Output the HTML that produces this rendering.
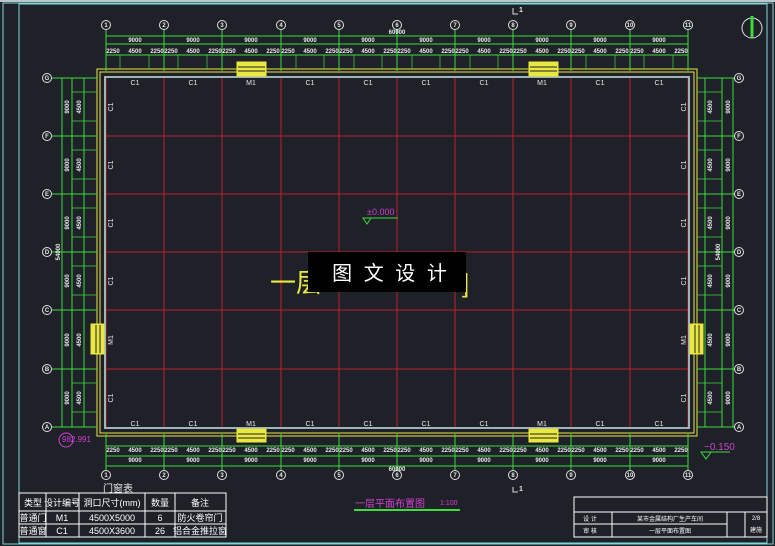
<!DOCTYPE html>
<html><head><meta charset="utf-8"><style>
html,body{margin:0;padding:0;background:#1f2128;}
svg{display:block}
text{font-family:"Liberation Sans","Noto Sans CJK SC",sans-serif}
</style></head><body>
<svg width="775" height="546" viewBox="0 0 775 546" xmlns="http://www.w3.org/2000/svg">
<rect width="775" height="546" fill="#1f2128"/>
<rect x="3" y="3" width="770" height="541" fill="none" stroke="#7fd8d8" stroke-width="1"/>
<rect x="19" y="4" width="748" height="539" fill="none" stroke="#7fd8d8" stroke-width="1"/>
<rect x="0" y="0" width="775" height="2" fill="#bfc4c8"/>

<g stroke="#c0202a" stroke-width="1">
<line x1="106" y1="78" x2="106" y2="427"/><line x1="164" y1="78" x2="164" y2="427"/><line x1="222" y1="78" x2="222" y2="427"/><line x1="281" y1="78" x2="281" y2="427"/><line x1="339" y1="78" x2="339" y2="427"/><line x1="397" y1="78" x2="397" y2="427"/><line x1="455" y1="78" x2="455" y2="427"/><line x1="513" y1="78" x2="513" y2="427"/><line x1="571" y1="78" x2="571" y2="427"/><line x1="630" y1="78" x2="630" y2="427"/><line x1="688" y1="78" x2="688" y2="427"/>
<line x1="106" y1="136" x2="688" y2="136"/><line x1="106" y1="194" x2="688" y2="194"/><line x1="106" y1="252" x2="688" y2="252"/><line x1="106" y1="310" x2="688" y2="310"/><line x1="106" y1="369" x2="688" y2="369"/>
</g>
<rect x="105" y="77" width="584" height="351" fill="none" stroke="#9fb4b8" stroke-width="2"/>
<rect x="100" y="72" width="594" height="361" fill="none" stroke="#e8e840" stroke-width="1"/>
<rect x="97" y="69" width="600" height="367" fill="none" stroke="#e8e840" stroke-width="1"/>
<g fill="#e8e840" stroke="#e8e840">
<rect x="237" y="62" width="29" height="14"/><rect x="529" y="62" width="29" height="14"/>
<rect x="237" y="429" width="29" height="13"/><rect x="529" y="429" width="29" height="13"/>
<rect x="91" y="324" width="13" height="30"/><rect x="690" y="324" width="13" height="30"/>
</g>
<g stroke="#1f2128" stroke-width="1"><line x1="238" y1="67" x2="265" y2="67"/><line x1="238" y1="71" x2="265" y2="71"/><line x1="530" y1="67" x2="557" y2="67"/><line x1="530" y1="71" x2="557" y2="71"/><line x1="238" y1="434" x2="265" y2="434"/><line x1="238" y1="438" x2="265" y2="438"/><line x1="530" y1="434" x2="557" y2="434"/><line x1="530" y1="438" x2="557" y2="438"/><line x1="96" y1="325" x2="96" y2="353"/><line x1="100" y1="325" x2="100" y2="353"/><line x1="695" y1="325" x2="695" y2="353"/><line x1="699" y1="325" x2="699" y2="353"/></g>

<g stroke="#3cdc3c" stroke-width="1" fill="none">
<line x1="106" y1="36" x2="688" y2="36"/><line x1="106" y1="44" x2="688" y2="44"/><line x1="106" y1="55" x2="688" y2="55"/>
<line x1="106" y1="446" x2="688" y2="446"/><line x1="106" y1="456" x2="688" y2="456"/><line x1="106" y1="466" x2="688" y2="466"/>
<line x1="62" y1="78" x2="62" y2="427"/><line x1="72" y1="78" x2="72" y2="427"/><line x1="84" y1="78" x2="84" y2="427"/>
<line x1="705" y1="78" x2="705" y2="427"/><line x1="722" y1="78" x2="722" y2="427"/><line x1="733" y1="78" x2="733" y2="427"/>
<line x1="106" y1="30" x2="106" y2="71"/><line x1="164" y1="30" x2="164" y2="71"/><line x1="222" y1="30" x2="222" y2="71"/><line x1="281" y1="30" x2="281" y2="71"/><line x1="339" y1="30" x2="339" y2="71"/><line x1="397" y1="30" x2="397" y2="71"/><line x1="455" y1="30" x2="455" y2="71"/><line x1="513" y1="30" x2="513" y2="71"/><line x1="571" y1="30" x2="571" y2="71"/><line x1="630" y1="30" x2="630" y2="71"/><line x1="688" y1="30" x2="688" y2="71"/>
<line x1="106" y1="434" x2="106" y2="470"/><line x1="164" y1="434" x2="164" y2="470"/><line x1="222" y1="434" x2="222" y2="470"/><line x1="281" y1="434" x2="281" y2="470"/><line x1="339" y1="434" x2="339" y2="470"/><line x1="397" y1="434" x2="397" y2="470"/><line x1="455" y1="434" x2="455" y2="470"/><line x1="513" y1="434" x2="513" y2="470"/><line x1="571" y1="434" x2="571" y2="470"/><line x1="630" y1="434" x2="630" y2="470"/><line x1="688" y1="434" x2="688" y2="470"/>
<line x1="52" y1="78" x2="97" y2="78"/><line x1="52" y1="136" x2="97" y2="136"/><line x1="52" y1="194" x2="97" y2="194"/><line x1="52" y1="252" x2="97" y2="252"/><line x1="52" y1="310" x2="97" y2="310"/><line x1="52" y1="369" x2="97" y2="369"/><line x1="52" y1="427" x2="97" y2="427"/>
<line x1="697" y1="78" x2="735" y2="78"/><line x1="697" y1="136" x2="735" y2="136"/><line x1="697" y1="194" x2="735" y2="194"/><line x1="697" y1="252" x2="735" y2="252"/><line x1="697" y1="310" x2="735" y2="310"/><line x1="697" y1="369" x2="735" y2="369"/><line x1="697" y1="427" x2="735" y2="427"/>
<g stroke-width="0.7"><line x1="120" y1="55" x2="120" y2="69"/><line x1="149" y1="55" x2="149" y2="69"/><line x1="178" y1="55" x2="178" y2="69"/><line x1="207" y1="55" x2="207" y2="69"/><line x1="296" y1="55" x2="296" y2="69"/><line x1="324" y1="55" x2="324" y2="69"/><line x1="354" y1="55" x2="354" y2="69"/><line x1="382" y1="55" x2="382" y2="69"/><line x1="412" y1="55" x2="412" y2="69"/><line x1="440" y1="55" x2="440" y2="69"/><line x1="470" y1="55" x2="470" y2="69"/><line x1="498" y1="55" x2="498" y2="69"/><line x1="586" y1="55" x2="586" y2="69"/><line x1="615" y1="55" x2="615" y2="69"/><line x1="644" y1="55" x2="644" y2="69"/><line x1="673" y1="55" x2="673" y2="69"/>
<line x1="72" y1="92" x2="97" y2="92"/><line x1="72" y1="121" x2="97" y2="121"/><line x1="72" y1="150" x2="97" y2="150"/><line x1="72" y1="179" x2="97" y2="179"/><line x1="72" y1="208" x2="97" y2="208"/><line x1="72" y1="237" x2="97" y2="237"/><line x1="72" y1="266" x2="97" y2="266"/><line x1="72" y1="295" x2="97" y2="295"/><line x1="72" y1="383" x2="97" y2="383"/><line x1="72" y1="412" x2="97" y2="412"/>
<line x1="697" y1="92" x2="722" y2="92"/><line x1="697" y1="121" x2="722" y2="121"/><line x1="697" y1="150" x2="722" y2="150"/><line x1="697" y1="179" x2="722" y2="179"/><line x1="697" y1="208" x2="722" y2="208"/><line x1="697" y1="237" x2="722" y2="237"/><line x1="697" y1="266" x2="722" y2="266"/><line x1="697" y1="295" x2="722" y2="295"/><line x1="697" y1="383" x2="722" y2="383"/><line x1="697" y1="412" x2="722" y2="412"/></g>
<g stroke="#e0e0e0"><circle cx="106" cy="25" r="4.5"/><circle cx="164" cy="25" r="4.5"/><circle cx="222" cy="25" r="4.5"/><circle cx="281" cy="25" r="4.5"/><circle cx="339" cy="25" r="4.5"/><circle cx="397" cy="25" r="4.5"/><circle cx="455" cy="25" r="4.5"/><circle cx="513" cy="25" r="4.5"/><circle cx="571" cy="25" r="4.5"/><circle cx="630" cy="25" r="4.5"/><circle cx="688" cy="25" r="4.5"/>
<circle cx="106" cy="475" r="4.5"/><circle cx="164" cy="475" r="4.5"/><circle cx="222" cy="475" r="4.5"/><circle cx="281" cy="475" r="4.5"/><circle cx="339" cy="475" r="4.5"/><circle cx="397" cy="475" r="4.5"/><circle cx="455" cy="475" r="4.5"/><circle cx="513" cy="475" r="4.5"/><circle cx="571" cy="475" r="4.5"/><circle cx="630" cy="475" r="4.5"/><circle cx="688" cy="475" r="4.5"/>
<circle cx="47" cy="78" r="4.5"/><circle cx="47" cy="136" r="4.5"/><circle cx="47" cy="194" r="4.5"/><circle cx="47" cy="252" r="4.5"/><circle cx="47" cy="310" r="4.5"/><circle cx="47" cy="369" r="4.5"/><circle cx="47" cy="427" r="4.5"/>
<circle cx="739" cy="78" r="4.5"/><circle cx="739" cy="136" r="4.5"/><circle cx="739" cy="194" r="4.5"/><circle cx="739" cy="252" r="4.5"/><circle cx="739" cy="310" r="4.5"/><circle cx="739" cy="369" r="4.5"/><circle cx="739" cy="427" r="4.5"/>
<circle cx="752" cy="28" r="10"/></g>
<line x1="752" y1="16" x2="752" y2="38" stroke="#3cdc3c" stroke-width="3"/>
<path d="M513 8 V14 H518 M513 487 V492 H518" stroke="#e0e0e0"/>
<path d="M701 452 L711 452 L706 459 Z M701 452 H730" stroke="#3cdc3c"/>
<path d="M363 218 L371 218 L367 224 Z M363 218 H398" stroke="#3cdc3c"/>
<line x1="354" y1="510" x2="460" y2="510" stroke="#3cdc3c" stroke-width="2"/>
</g>
<g fill="#e8e8e8" font-size="6" text-anchor="middle" font-weight="bold">
<text x="135" y="42">9000</text><text x="193" y="42">9000</text><text x="251" y="42">9000</text><text x="310" y="42">9000</text><text x="368" y="42">9000</text><text x="426" y="42">9000</text><text x="484" y="42">9000</text><text x="542" y="42">9000</text><text x="600" y="42">9000</text><text x="659" y="42">9000</text>
<text x="397" y="34">60000</text>
<text x="113" y="53">2250</text><text x="135" y="53">4500</text><text x="157" y="53">2250</text><text x="171" y="53">2250</text><text x="193" y="53">4500</text><text x="215" y="53">2250</text><text x="229" y="53">2250</text><text x="251" y="53">4500</text><text x="273" y="53">2250</text><text x="288" y="53">2250</text><text x="310" y="53">4500</text><text x="332" y="53">2250</text><text x="346" y="53">2250</text><text x="368" y="53">4500</text><text x="390" y="53">2250</text><text x="404" y="53">2250</text><text x="426" y="53">4500</text><text x="448" y="53">2250</text><text x="462" y="53">2250</text><text x="484" y="53">4500</text><text x="506" y="53">2250</text><text x="520" y="53">2250</text><text x="542" y="53">4500</text><text x="564" y="53">2250</text><text x="578" y="53">2250</text><text x="600" y="53">4500</text><text x="622" y="53">2250</text><text x="637" y="53">2250</text><text x="659" y="53">4500</text><text x="681" y="53">2250</text>
<text x="113" y="452">2250</text><text x="135" y="452">4500</text><text x="157" y="452">2250</text><text x="171" y="452">2250</text><text x="193" y="452">4500</text><text x="215" y="452">2250</text><text x="229" y="452">2250</text><text x="251" y="452">4500</text><text x="273" y="452">2250</text><text x="288" y="452">2250</text><text x="310" y="452">4500</text><text x="332" y="452">2250</text><text x="346" y="452">2250</text><text x="368" y="452">4500</text><text x="390" y="452">2250</text><text x="404" y="452">2250</text><text x="426" y="452">4500</text><text x="448" y="452">2250</text><text x="462" y="452">2250</text><text x="484" y="452">4500</text><text x="506" y="452">2250</text><text x="520" y="452">2250</text><text x="542" y="452">4500</text><text x="564" y="452">2250</text><text x="578" y="452">2250</text><text x="600" y="452">4500</text><text x="622" y="452">2250</text><text x="637" y="452">2250</text><text x="659" y="452">4500</text><text x="681" y="452">2250</text>
<text x="135" y="462">9000</text><text x="193" y="462">9000</text><text x="251" y="462">9000</text><text x="310" y="462">9000</text><text x="368" y="462">9000</text><text x="426" y="462">9000</text><text x="484" y="462">9000</text><text x="542" y="462">9000</text><text x="600" y="462">9000</text><text x="659" y="462">9000</text>
<text x="397" y="471">60000</text>
<text x="106" y="27">1</text><text x="164" y="27">2</text><text x="222" y="27">3</text><text x="281" y="27">4</text><text x="339" y="27">5</text><text x="397" y="27">6</text><text x="455" y="27">7</text><text x="513" y="27">8</text><text x="571" y="27">9</text><text x="630" y="27">10</text><text x="688" y="27">11</text>
<text x="106" y="477">1</text><text x="164" y="477">2</text><text x="222" y="477">3</text><text x="281" y="477">4</text><text x="339" y="477">5</text><text x="397" y="477">6</text><text x="455" y="477">7</text><text x="513" y="477">8</text><text x="571" y="477">9</text><text x="630" y="477">10</text><text x="688" y="477">11</text>
<text x="47" y="80">G</text><text x="47" y="138">F</text><text x="47" y="196">E</text><text x="47" y="254">D</text><text x="47" y="312">C</text><text x="47" y="371">B</text><text x="47" y="429">A</text>
<text x="739" y="80">G</text><text x="739" y="138">F</text><text x="739" y="196">E</text><text x="739" y="254">D</text><text x="739" y="312">C</text><text x="739" y="371">B</text><text x="739" y="429">A</text>
<text x="521" y="12" font-size="7">1</text><text x="521" y="491" font-size="7">1</text>
</g>
<g fill="#e8e8e8" font-size="6" text-anchor="middle" font-weight="bold">
<text transform="translate(69,107) rotate(-90)">9000</text><text transform="translate(69,165) rotate(-90)">9000</text><text transform="translate(69,223) rotate(-90)">9000</text><text transform="translate(69,281) rotate(-90)">9000</text><text transform="translate(69,340) rotate(-90)">9000</text><text transform="translate(69,398) rotate(-90)">9000</text>
<text transform="translate(60,252) rotate(-90)">54000</text>
<text transform="translate(81,107) rotate(-90)">4500</text><text transform="translate(81,165) rotate(-90)">4500</text><text transform="translate(81,223) rotate(-90)">4500</text><text transform="translate(81,281) rotate(-90)">4500</text><text transform="translate(81,340) rotate(-90)">4500</text><text transform="translate(81,398) rotate(-90)">4500</text>
<text transform="translate(730,107) rotate(-90)">9000</text><text transform="translate(730,165) rotate(-90)">9000</text><text transform="translate(730,223) rotate(-90)">9000</text><text transform="translate(730,281) rotate(-90)">9000</text><text transform="translate(730,340) rotate(-90)">9000</text><text transform="translate(730,398) rotate(-90)">9000</text>
<text transform="translate(720,252) rotate(-90)">54000</text>
<text transform="translate(712,107) rotate(-90)">4500</text><text transform="translate(712,165) rotate(-90)">4500</text><text transform="translate(712,223) rotate(-90)">4500</text><text transform="translate(712,281) rotate(-90)">4500</text><text transform="translate(712,340) rotate(-90)">4500</text><text transform="translate(712,398) rotate(-90)">4500</text>
</g>
<g fill="#e8e8e8" font-size="7" text-anchor="middle">
<text x="135" y="85">C1</text><text x="193" y="85">C1</text><text x="251" y="85">M1</text><text x="310" y="85">C1</text><text x="368" y="85">C1</text><text x="426" y="85">C1</text><text x="484" y="85">C1</text><text x="542" y="85">M1</text><text x="600" y="85">C1</text><text x="659" y="85">C1</text>
<text x="135" y="426">C1</text><text x="193" y="426">C1</text><text x="251" y="426">M1</text><text x="310" y="426">C1</text><text x="368" y="426">C1</text><text x="426" y="426">C1</text><text x="484" y="426">C1</text><text x="542" y="426">M1</text><text x="600" y="426">C1</text><text x="659" y="426">C1</text>
<text transform="translate(113,107) rotate(-90)">C1</text><text transform="translate(113,165) rotate(-90)">C1</text><text transform="translate(113,223) rotate(-90)">C1</text><text transform="translate(113,281) rotate(-90)">C1</text><text transform="translate(113,340) rotate(-90)">M1</text><text transform="translate(113,398) rotate(-90)">C1</text>
<text transform="translate(686,107) rotate(-90)">C1</text><text transform="translate(686,165) rotate(-90)">C1</text><text transform="translate(686,223) rotate(-90)">C1</text><text transform="translate(686,281) rotate(-90)">C1</text><text transform="translate(686,340) rotate(-90)">M1</text><text transform="translate(686,398) rotate(-90)">C1</text>
</g>
<text x="367" y="215" fill="#d040d0" font-size="9">±0.000</text>
<text x="704" y="450" fill="#d040d0" font-size="10">−0.150</text>
<text x="62" y="442" fill="#d040d0" font-size="8">982.991</text>
<circle cx="66" cy="440" r="7" fill="none" stroke="#d040d0"/>
<text x="270" y="292" fill="#e8e840" font-size="26">一层</text>
<text x="462" y="292" fill="#e8e840" font-size="26">]</text>
<rect x="308" y="252" width="158" height="40" fill="#000"/>
<text x="391" y="280" fill="#ffffff" font-size="20" text-anchor="middle" letter-spacing="3">图 文 设 计</text>
<text x="355" y="507" fill="#d040d0" font-size="10">一层平面布置图</text>
<text x="440" y="505" fill="#d040d0" font-size="7">1:100</text>
<text x="103" y="492" fill="#e8e8e8" font-size="10">门窗表</text>
<g stroke="#ffffff" fill="none"><rect x="19" y="493" width="207" height="44"/><line x1="19" y1="511" x2="226" y2="511"/><line x1="19" y1="524" x2="226" y2="524"/><line x1="46" y1="493" x2="46" y2="537"/><line x1="79" y1="493" x2="79" y2="537"/><line x1="145" y1="493" x2="145" y2="537"/><line x1="175" y1="493" x2="175" y2="537"/></g>
<g fill="#ffffff" font-size="9" text-anchor="middle">
<text x="33" y="506">类型</text><text x="62" y="506">设计编号</text><text x="112" y="506">洞口尺寸(mm)</text><text x="160" y="506">数量</text><text x="200" y="506">备注</text>
<text x="33" y="521">普通门</text><text x="62" y="521">M1</text><text x="112" y="521">4500X5000</text><text x="160" y="521">6</text><text x="200" y="521">防火卷帘门</text>
<text x="33" y="534">普通窗</text><text x="62" y="534">C1</text><text x="112" y="534">4500X3600</text><text x="160" y="534">26</text><text x="200" y="534">铝合金推拉窗</text>
</g>
<g stroke="#ffffff" fill="none"><rect x="574" y="497" width="193" height="40"/><line x1="574" y1="512" x2="767" y2="512"/><line x1="574" y1="524" x2="727" y2="524"/><line x1="612" y1="512" x2="612" y2="537"/><line x1="727" y1="512" x2="727" y2="537"/><line x1="745" y1="512" x2="745" y2="537"/></g>
<g fill="#ffffff" font-size="6" text-anchor="middle"><text x="670" y="521">某市金属结构厂生产车间</text><text x="670" y="533">一层平面布置图</text><text x="756" y="520">2/8</text><text x="756" y="532">建施</text><text x="590" y="521">设 计</text><text x="590" y="533">审 核</text></g>
</svg>
</body></html>
